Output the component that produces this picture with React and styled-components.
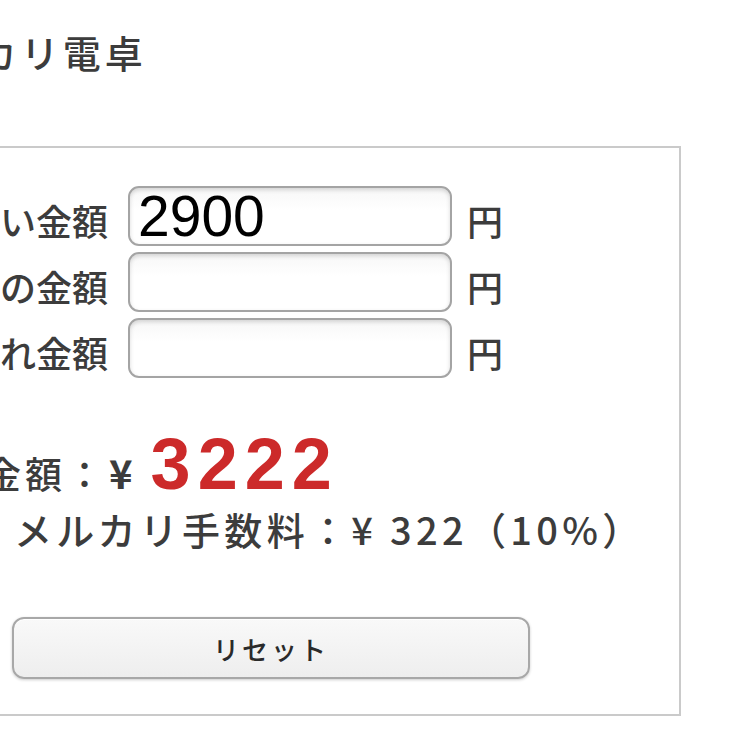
import React, { useState } from "react";
import styled, { createGlobalStyle } from "styled-components";

const GlobalStyle = createGlobalStyle`
	html, body {
		margin: 0;
		padding: 0;
		background: #fff;
		overflow: hidden;
	}
	body {
		font-family: "Noto Sans CJK JP", "Noto Sans", sans-serif;
		color: #3c3c3c;
	}
`;

const Page = styled.div`
	width: 748px;
	height: 748px;
	overflow: hidden;
`;

const Title = styled.h1`
	margin: 0;
	padding-top: 30px;
	margin-left: -104px;
	font-size: 38px;
	line-height: 44px;
	font-weight: 500;
	letter-spacing: 4px;
	white-space: nowrap;
`;

const Panel = styled.div`
	margin-top: 72px;
	margin-left: -80px;
	width: 761px;
	height: 570px;
	box-sizing: border-box;
	border: 2px solid #cacaca;
	padding: 38px 0 0 6px;
	display: flex;
	flex-direction: column;
`;

const Rows = styled.div`
	display: flex;
	flex-direction: column;
	gap: 6px;
`;

const Row = styled.div`
	display: flex;
	align-items: center;
	height: 60px;
`;

const Label = styled.label`
	flex: none;
	width: 180px;
	text-align: right;
	font-size: 36px;
	font-weight: 500;
	white-space: nowrap;
	margin-right: 20px;
	position: relative;
	top: 4px;
`;

const Input = styled.input`
	flex: none;
	width: 324px;
	min-width: 0;
	height: 60px;
	box-sizing: border-box;
	border: 2px solid #a4a4a4;
	border-radius: 11px;
	background: linear-gradient(#f7f7f7, #fff 40%);
	box-shadow: inset 0 2px 4px rgba(0, 0, 0, 0.15);
	padding: 0 8px;
	font-family: "Liberation Sans", Arial, sans-serif;
	font-size: 57px;
	color: #000;
	outline: none;
`;

const Unit = styled.span`
	flex: none;
	margin-left: 15px;
	font-size: 36px;
	font-weight: 500;
	position: relative;
	top: 4px;
`;

const Total = styled.div`
	margin-top: 50px;
	margin-left: -26px;
	display: flex;
	align-items: baseline;
	font-size: 37px;
	font-weight: 500;
	letter-spacing: 4px;
	white-space: nowrap;
`;

const Yen = styled.span`
	font-size: 40px;
	font-weight: 700;
	margin-left: 2px;
`;

const Amount = styled.span`
	font-family: "Liberation Sans", Arial, sans-serif;
	font-weight: 700;
	font-size: 72px;
	letter-spacing: 7px;
	color: #cc2a2a;
	margin-left: 14px;
	line-height: 1;
`;

const Fee = styled.div`
	margin-top: 4px;
	margin-left: 86px;
	font-size: 38px;
	font-weight: 500;
	letter-spacing: 4.3px;
	white-space: nowrap;
	line-height: 48px;
`;

const ResetButton = styled.button`
	margin-top: 64px;
	margin-left: 84px;
	width: 518px;
	height: 62px;
	border: 2px solid #a8a8a8;
	border-radius: 12px;
	background: linear-gradient(#f9f9f9, #eeeeee);
	box-shadow: 0 1px 3px rgba(0, 0, 0, 0.2), inset 0 1px 0 #fff;
	font-family: "Noto Sans CJK JP", sans-serif;
	font-size: 26px;
	font-weight: 500;
	letter-spacing: 3px;
	color: #2a2a2a;
	padding: 0;
`;

const fields = [
	{ label: "ほしい金額", key: "want" },
	{ label: "送料の金額", key: "ship" },
	{ label: "仕入れ金額", key: "cost" },
];

export default function App() {
	const [values, setValues] = useState({ want: "2900", ship: "", cost: "" });
	const want = Number(values.want) || 0;
	const price = Math.floor(want / 0.9);
	const fee = price - want;

	return (
		<Page>
			<GlobalStyle />
			<Title>メルカリ電卓</Title>
			<Panel>
				<Rows>
					{fields.map((f) => (
						<Row key={f.key}>
							<Label>{f.label}</Label>
							<Input
								value={values[f.key]}
								onChange={(e) => setValues({ ...values, [f.key]: e.target.value })}
							/>
							<Unit>円</Unit>
						</Row>
					))}
				</Rows>
				<Total>
					販売金額：<Yen>¥</Yen>
					<Amount>{price}</Amount>
				</Total>
				<Fee>メルカリ手数料：¥ {fee}（10%）</Fee>
				<ResetButton onClick={() => setValues({ want: "", ship: "", cost: "" })}>
					リセット
				</ResetButton>
			</Panel>
		</Page>
	);
}
